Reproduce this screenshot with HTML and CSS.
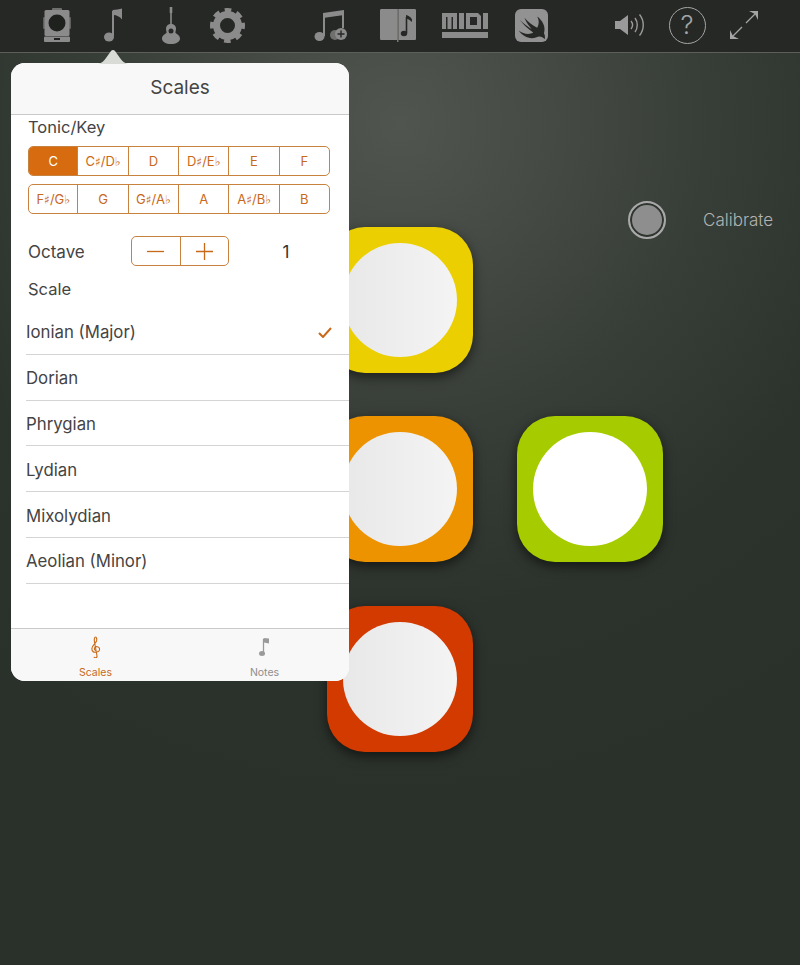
FILE: index.html
```html
<!DOCTYPE html>
<html>
<head>
  <meta charset="UTF-8">
  <meta name="viewport" content="width=device-width, initial-scale=1.0">
  <title>Scales</title>
  <link rel="stylesheet" href="styles.css">
</head>
<body>
  <header class="toolbar">
    <div class="tool-group group-one">
      <div class="tool">
        <svg width="28" height="35" viewBox="0 0 28 35"><rect x="0" y="9" width="2" height="12" rx="1" fill="#5f605e"/><rect x="26" y="9" width="2" height="12" rx="1" fill="#5f605e"/><rect x="9" y="0" width="10" height="3" rx="1" fill="#6f706e"/><rect x="1.500" y="2" width="25" height="26" rx="1.500" fill="#8b8b8b"/><circle cx="14" cy="15" r="8.500" fill="#1f211f"/><rect x="1" y="28.500" width="26" height="5.500" rx="1" fill="#8b8b8b"/><rect x="11" y="30" width="6" height="2" fill="#1f211f"/></svg>
      </div>
      <div class="tool">
        <svg width="19" height="35" viewBox="0 0 19 35"><path d="M9 3v25" stroke="#8b8b8b" stroke-width="2" fill="none"/><path d="M8.500 2c3 0 7-1 9.500-1.500v11c-2-3-6-4.500-8-4.500z" fill="#8b8b8b"/><ellipse cx="5" cy="29" rx="5" ry="4.500" fill="#8b8b8b"/></svg>
      </div>
      <div class="tool">
        <svg width="18" height="37" viewBox="0 0 18 37"><path d="M7.700 0h2.600v6h-.5v12h-1.600v-12h-.5z" fill="#8b8b8b"/><path d="M9 17c-3 0-5 2-5 4.500 0 2 .6 3 .6 4 0 1-4.600 2.500-4.600 6 0 3.500 4 5.500 9 5.500s9-2 9-5.500c0-3.500-4.600-5-4.600-6 0-1 .6-2 .6-4 0-2.500-2-4.500-5-4.500z" fill="#8b8b8b"/><circle cx="9" cy="24" r="2.500" fill="#262825"/></svg>
      </div>
      <div class="tool">
        <svg width="35" height="35" viewBox="0 0 35 35"><circle cx="17.500" cy="17.500" r="11" stroke="#8b8b8b" stroke-width="7" fill="none"/><circle cx="17.500" cy="17.500" r="15.200" stroke="#8b8b8b" stroke-width="4.600" stroke-dasharray="6.500 5.440" stroke-dashoffset="3.250" fill="none"/></svg>
      </div>
    </div>
    <div class="tool-group group-two">
      <div class="tool">
        <svg width="34" height="33" viewBox="0 0 34 33"><path d="M10 6v21M29 2v17" stroke="#8b8b8b" stroke-width="2" fill="none"/><path d="M9 4l21-3v5l-21 3z" fill="#8b8b8b"/><ellipse cx="5.500" cy="27.500" rx="5" ry="4.500" fill="#8b8b8b"/><circle cx="21" cy="26" r="5" fill="#6f706e"/><circle cx="27" cy="25" r="6" fill="#8b8b8b"/><path d="M27 21.500v7M23.500 25h7" stroke="#262825" stroke-width="1.400"/></svg>
      </div>
      <div class="tool">
        <svg width="36" height="33" viewBox="0 0 36 33"><path d="M1.500 0h15.500v31h-15.500c-1 0-1.500-.5-1.500-1.500v-28c0-1 .5-1.500 1.500-1.500z" fill="#8b8b8b"/><path d="M18.500 0h16c1 0 1.500 .5 1.500 1.500v28c0 1-.5 1.500-1.500 1.500h-16z" fill="#8b8b8b"/><path d="M17.200 0h1.200v33h-1.200z" fill="#8b8b8b"/><path d="M26.500 8v16" stroke="#262825" stroke-width="1.600"/><path d="M26 6c2 .5 5 2 6 4.500 0 1 0 2-.5 2.500-1-2-3.500-3-5.500-3.500z" fill="#262825"/><ellipse cx="24" cy="24.500" rx="3.200" ry="2.700" fill="#262825"/></svg>
      </div>
      <div class="tool">
        <svg width="46" height="25" viewBox="0 0 46 25"><path d="M0 0h15v16h-4v-12h-1.500v12h-4v-12h-1.500v12h-4zM17 0h5v16h-5zM24 0h12l3 3v13h-15zM28 4v8h7v-8zM41 0h5v16h-5z" fill="#8b8b8b" fill-rule="evenodd"/><rect x="0" y="19" width="46" height="6" fill="#8b8b8b"/></svg>
      </div>
      <div class="tool">
        <svg width="33" height="33" viewBox="0 0 98 98"><rect width="98" height="98" rx="18" fill="#929292"/><path d="M66 22C82 34 92 52 86 72c3 6 4 12 2 18-6-8-16-10-24-6-20 8-40-2-53-20 13 10 31 14 43 6C40 60 24 46 14 32c12 12 26 22 36 28-8-10-16-18-22-34 12 14 26 24 38 30 6-12 6-24 0-34z" fill="#262825"/></svg>
      </div>
    </div>
    <div class="tool-group group-three">
      <div class="tool">
        <svg width="30" height="24" viewBox="0 0 30 24"><path d="M0 8h5l8-6v20l-8-6h-5z" fill="#9a9a9a"/><path d="M16 8c2 2.500 2 5.500 0 8M20 5c3 4 3 10 0 14M24.500 1.500c5 6 5 15 0 21" stroke="#9a9a9a" stroke-width="1.400" fill="none"/></svg>
      </div>
      <div class="tool">
        <div class="help">?</div>
      </div>
      <div class="tool">
        <svg width="28" height="28" viewBox="0 0 28 28"><path d="M27 1l-11 11M1 27l11-11" stroke="#a5a5a5" stroke-width="1.300"/><path d="M19 0h9v9l-3-6zM0 19v9h9l-6-3z" fill="#a5a5a5"/></svg>
      </div>
    </div>
  </header>

  <main class="stage">
    <div class="pad pad-yellow"><div class="pad-dot"></div></div>
    <div class="pad pad-orange"><div class="pad-dot"></div></div>
    <div class="pad pad-red"><div class="pad-dot"></div></div>
    <div class="pad pad-green"><div class="pad-dot pad-dot-on"></div></div>

    <div class="calibrate">
      <div class="record"></div>
      <span>Calibrate</span>
    </div>

    <section class="popover">
      <svg class="popover-arrow" width="30" height="15" viewBox="0 0 30 15"><path d="M0 15c4-1 6-3 8-6l5-7c1-1.500 3-1.500 4 0l5 7c2 3 4 5 8 6z" fill="#d8dbd6"/></svg>
      <div class="popover-title">Scales</div>
      <div class="popover-body">
        <div class="controls">
          <div class="label label-tonic">Tonic/Key</div>
          <div class="segments">
            <div class="segment active">C</div>
            <div class="segment">C<span class="acc">♯</span>/D<span class="acc">♭</span></div>
            <div class="segment">D</div>
            <div class="segment">D<span class="acc">♯</span>/E<span class="acc">♭</span></div>
            <div class="segment">E</div>
            <div class="segment">F</div>
          </div>
          <div class="segments second">
            <div class="segment">F<span class="acc">♯</span>/G<span class="acc">♭</span></div>
            <div class="segment">G</div>
            <div class="segment">G<span class="acc">♯</span>/A<span class="acc">♭</span></div>
            <div class="segment">A</div>
            <div class="segment">A<span class="acc">♯</span>/B<span class="acc">♭</span></div>
            <div class="segment">B</div>
          </div>
          <div class="octave">
            <div class="label octave-label">Octave</div>
            <div class="stepper">
              <div class="step"><svg width="17" height="17" viewBox="0 0 17 17"><path d="M0 8.500h17" stroke="#c8691a" stroke-width="1.300"/></svg></div>
              <div class="step"><svg width="17" height="17" viewBox="0 0 17 17"><path d="M0 8.500h17M8.500 0v17" stroke="#c8691a" stroke-width="1.300"/></svg></div>
            </div>
            <div class="octave-value">1</div>
          </div>
          <div class="label label-scale">Scale</div>
        </div>
        <ul class="scale-list">
          <li class="scale-row">Ionian (Major)
            <svg width="14" height="11" viewBox="0 0 14 11"><path d="M1 6l4 4 8-9" stroke="#c8691a" stroke-width="2" fill="none"/></svg>
          </li>
          <li class="scale-row">Dorian</li>
          <li class="scale-row">Phrygian</li>
          <li class="scale-row">Lydian</li>
          <li class="scale-row">Mixolydian</li>
          <li class="scale-row">Aeolian (Minor)</li>
        </ul>
      </div>
      <nav class="tabs">
        <div class="tab tab-active">
          <svg width="10" height="22" viewBox="0 0 10 22"><path d="M5.500 16c-3 1-5-1-4.500-4 .4-2.500 3.500-4.500 4.500-7 .6-2 0-4-1-4s-1.500 2-1 5l2.500 14c.3 2-2.500 2.500-3 .8" stroke="#c8691a" stroke-width="1.100" fill="none"/><path d="M5.500 16c2 0 3.500-1.500 3-3.500-.5-2-3.500-2.500-4.800-.8-.8 1.200 0 2.800 1.300 2.800" stroke="#c8691a" stroke-width="1.100" fill="none"/></svg>
          <span>Scales</span>
        </div>
        <div class="tab">
          <svg width="11" height="20" viewBox="0 0 11 20"><path d="M4.500 2v14" stroke="#9a9a9a" stroke-width="1.300"/><path d="M4.500 1l5.500.5v5l-5-1z" fill="#9a9a9a"/><ellipse cx="3" cy="16.500" rx="3" ry="2.500" fill="#9a9a9a"/></svg>
          <span>Notes</span>
        </div>
      </nav>
    </section>
  </main>
</body>
</html>
```

FILE: styles.css
```css
* {
  box-sizing: border-box;
}

html,
body {
  height: 100%;
}

body {
  margin: 0;
  overflow: hidden;
  font-family: Inter, "Noto Sans", "DejaVu Sans", sans-serif;
  background-color: #2a302a;
}

.toolbar {
  display: flex;
  align-items: center;
  height: 53px;
  padding-left: 28px;
  padding-bottom: 2px;
  background-color: #262825;
  border-bottom: 1px solid #5c5f5b;
}

.tool-group {
  display: flex;
  align-items: center;
}

.group-one .tool {
  width: 57px;
}

.group-two {
  margin-left: 41px;
}

.group-two .tool {
  width: 67px;
}

.group-three {
  margin-left: 36px;
}

.group-three .tool {
  width: 57px;
}

.tool {
  display: flex;
  justify-content: center;
  align-items: center;
}

.help {
  width: 37px;
  height: 37px;
  margin-left: 1px;
  border: 1.3px solid #a5a5a5;
  border-radius: 50%;
  color: #a5a5a5;
  font-size: 26px;
  font-weight: 300;
  line-height: 34px;
  text-align: center;
}

.stage {
  position: relative;
  height: 912px;
  background: radial-gradient(circle at 400px 70px, #50554f 0, #454a44 150px, #373d37 310px, #2c322c 490px, #2a302a 700px);
}

.pad {
  position: absolute;
  display: flex;
  justify-content: center;
  align-items: center;
  width: 146px;
  height: 146px;
  border-radius: 38px;
  box-shadow: 0 4px 12px rgba(0, 0, 0, 0.55);
}

.pad-yellow {
  left: 327px;
  top: 174px;
  background-color: #eccf00;
}

.pad-orange {
  left: 327px;
  top: 363px;
  background-color: #ee9300;
}

.pad-red {
  left: 327px;
  top: 553px;
  background-color: #d23a00;
}

.pad-green {
  left: 517px;
  top: 363px;
  background-color: #a6cc00;
}

.pad-dot {
  width: 114px;
  height: 114px;
  border-radius: 50%;
  background: linear-gradient(to right, #e8e8e8, #f4f4f4);
}

.pad-dot-on {
  background: #fff;
}

.calibrate {
  position: absolute;
  left: 628px;
  top: 148px;
  display: flex;
  align-items: center;
  color: #b3b3b0;
  font-size: 17px;
  font-weight: 300;
}

.record {
  width: 38px;
  height: 38px;
  margin-right: 37px;
  border: 2px solid #a8a8a8;
  border-radius: 50%;
  background-color: #8e8e8e;
  box-shadow: inset 0 0 0 2px #2f352f;
}

.popover {
  position: absolute;
  left: 11px;
  top: 10px;
  display: flex;
  flex-direction: column;
  width: 338px;
  height: 618px;
  border-radius: 14px;
  background-color: #fff;
}

.popover-arrow {
  position: absolute;
  left: 87px;
  top: -14px;
}

.popover-title {
  height: 52px;
  border-bottom: 1px solid #c9c9c9;
  border-radius: 14px 14px 0 0;
  background-color: #f8f8f8;
  color: #444;
  font-size: 19px;
  line-height: 50px;
  text-align: center;
}

.popover-body {
  flex: 1;
}

.controls {
  padding: 0 19px 0 17px;
}

.label {
  height: 24px;
  color: #444;
  font-size: 16.5px;
  line-height: 24px;
}

.segments {
  display: flex;
  height: 30px;
  margin-top: 7px;
  border: 1px solid #c8823f;
  border-radius: 5px;
  overflow: hidden;
}

.segments.second {
  margin-top: 8px;
}

.segment {
  flex: 1;
  border-left: 1px solid #c8823f;
  color: #c8691a;
  font-size: 13px;
  line-height: 28px;
  text-align: center;
  white-space: nowrap;
}

.segment:first-child {
  flex: 0.98;
  border-left: none;
}

.segment.active {
  background-color: #d76b0f;
  color: #fff;
}

.acc {
  font-family: "DejaVu Sans", sans-serif;
  font-size: 12px;
}

.octave {
  display: flex;
  align-items: center;
  height: 30px;
  margin-top: 22px;
}

.octave-label {
  width: 103px;
  font-size: 17px;
  line-height: 26px;
}

.stepper {
  display: flex;
  width: 98px;
  height: 30px;
  border: 1px solid #c8823f;
  border-radius: 5px;
}

.step {
  display: flex;
  flex: 1;
  justify-content: center;
  align-items: center;
}

.step + .step {
  border-left: 1px solid #c8823f;
}

.octave-value {
  flex: 1;
  margin-left: 13px;
  padding-top: 1px;
  color: #333;
  font-size: 17px;
  text-align: center;
}

.label-scale {
  margin-top: 11px;
}

.scale-list {
  margin: 8px 0 0 15px;
  padding: 0;
  list-style: none;
}

.scale-row {
  display: flex;
  justify-content: space-between;
  align-items: center;
  height: 45.8px;
  padding-top: 2px;
  padding-right: 17px;
  border-bottom: 1px solid #d4d4d4;
  color: #444;
  font-size: 16.8px;
}

.tabs {
  display: flex;
  height: 53px;
  border-top: 1px solid #c9c9c9;
  border-radius: 0 0 14px 14px;
  background-color: #f8f8f8;
}

.tab {
  display: flex;
  flex: 1;
  flex-direction: column;
  align-items: center;
  padding-top: 7px;
  color: #8e8e8e;
  font-size: 10.5px;
}

.tab svg {
  height: 22px;
  margin-bottom: 8px;
}

.tab-active {
  color: #c8691a;
}
```
